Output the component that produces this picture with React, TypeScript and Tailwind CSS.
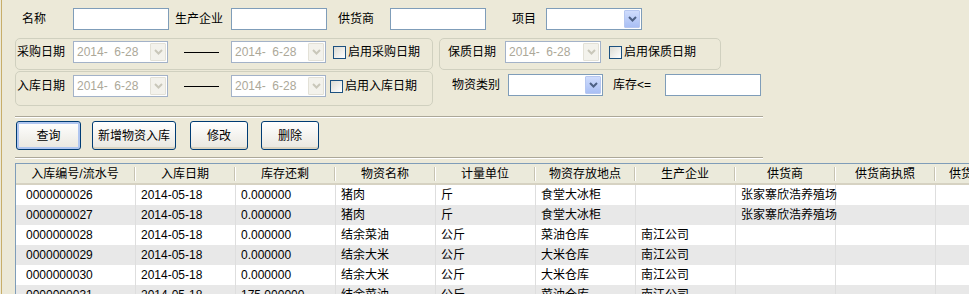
import React from 'react';

// 物资入库查询 - XP 风格窗体

const Chevron = ({ disabled }: { disabled?: boolean }) => (
  <svg width="9" height="6" viewBox="0 0 9 6">
    <path
      d="M1 1 L4.5 4.5 L8 1"
      fill="none"
      stroke={disabled ? '#c9c7ba' : '#4d6185'}
      strokeWidth="2"
    />
  </svg>
);

const DropButton = ({ disabled }: { disabled?: boolean }) =>
  disabled ? (
    <div className="w-[16px] h-[18px] flex items-center justify-center bg-[#f3f2ec] border border-[#e3e1d7] rounded-[1px]">
      <Chevron disabled />
    </div>
  ) : (
    <div className="w-[16px] h-[18px] flex items-center justify-center bg-linear-to-b from-[#cfdcfc] to-[#a9bff4] border border-[#b6c7f0] rounded-[1px]">
      <Chevron />
    </div>
  );

const TextBox = ({ className }: { className: string }) => (
  <div className={`h-[22px] bg-white border border-[#7f9db9] ${className}`} />
);

const Select = ({ className }: { className: string }) => (
  <div className={`h-[22px] bg-white border border-[#7f9db9] flex items-center justify-end pr-px ${className}`}>
    <DropButton />
  </div>
);

const DatePicker = ({ className }: { className: string }) => (
  <div className={`h-[22px] bg-white border border-[#a3b2c8] flex items-center justify-between pl-[3px] pr-px text-[#aca899] ${className}`}>
    <span className="whitespace-pre">2014-  6-28</span>
    <DropButton disabled />
  </div>
);

const CheckBox = ({ className }: { className: string }) => (
  <div className={`w-[13px] h-[13px] border border-[#1c5180] bg-linear-to-br from-[#dcdbd3] to-white ${className}`} />
);

const XpButton = ({ label, className, focused }: { label: string; className: string; focused?: boolean }) => (
  <div
    className={`h-[29px] flex items-center justify-center border border-[#003c74] rounded-[3px] bg-linear-to-b from-white to-[#e9e7df] ${
      focused
        ? 'shadow-[inset_0_0_0_2px_#b0c6f0]'
        : 'shadow-[inset_0_-2px_0_#d9d3c1]'
    } ${className}`}
  >
    {label}
  </div>
);

const columns = [
  { title: '入库编号/流水号', w: 'w-[120px]', pad: 'pl-[10px]' },
  { title: '入库日期', w: 'w-[100px]', pad: 'pl-[5px]' },
  { title: '库存还剩', w: 'w-[100px]', pad: 'pl-[5px]' },
  { title: '物资名称', w: 'w-[100px]', pad: 'pl-[5px]' },
  { title: '计量单位', w: 'w-[100px]', pad: 'pl-[5px]' },
  { title: '物资存放地点', w: 'w-[100px]', pad: 'pl-[5px]' },
  { title: '生产企业', w: 'w-[100px]', pad: 'pl-[5px]' },
  { title: '供货商', w: 'w-[100px]', pad: 'pl-[5px]' },
  { title: '供货商执照', w: 'w-[100px]', pad: 'pl-[5px]' },
  { title: '供货商联系人', w: 'w-[100px]', pad: 'pl-[5px]' },
];

const rows = [
  ['0000000026', '2014-05-18', '0.000000', '猪肉', '斤', '食堂大冰柜', '', '张家寨欣浩养殖场', '', ''],
  ['0000000027', '2014-05-18', '0.000000', '猪肉', '斤', '食堂大冰柜', '', '张家寨欣浩养殖场', '', ''],
  ['0000000028', '2014-05-18', '0.000000', '结余菜油', '公斤', '菜油仓库', '南江公司', '', '', ''],
  ['0000000029', '2014-05-18', '0.000000', '结余大米', '公斤', '大米仓库', '南江公司', '', '', ''],
  ['0000000030', '2014-05-18', '0.000000', '结余大米', '公斤', '大米仓库', '南江公司', '', '', ''],
  ['0000000031', '2014-05-18', '175.000000', '结余菜油', '公斤', '菜油仓库', '南江公司', '', '', ''],
];

export default function App() {
  return (
    <div className="w-[969px] h-[294px] overflow-hidden bg-[#ece9d8] pl-px text-[12px] text-black font-['Liberation_Sans','Noto_Sans_CJK_SC',sans-serif]">
      <div className="h-full border-l border-[#c8ae6a] pt-[8px]">
        {/* 第一行 查询条件 */}
        <div className="flex items-center h-[22px] pl-[20px]">
          <span className="w-[51px]">名称</span>
          <TextBox className="w-[96px]" />
          <span className="ml-[6px] w-[56px]">生产企业</span>
          <TextBox className="w-[96px]" />
          <span className="ml-[11px] w-[52px]">供货商</span>
          <TextBox className="w-[96px]" />
          <span className="ml-[26px] w-[34px]">项目</span>
          <Select className="w-[96px]" />
        </div>

        {/* 日期分组 */}
        <div className="flex items-start mt-[8px] ml-[13px]">
          <div className="w-[418px]">
            <div className="h-[32px] border border-[#d0d0bf] rounded-[5px] pt-[2px] pl-px">
              <div className="flex items-center h-[22px]">
                <span className="w-[56px]">采购日期</span>
                <DatePicker className="w-[95px]" />
                <div className="ml-[16px] w-[35px] border-t border-black" />
                <DatePicker className="ml-[12px] w-[95px]" />
                <CheckBox className="ml-[7px]" />
                <span className="ml-[2px]">启用采购日期</span>
              </div>
            </div>
            <div className="mt-[1px] h-[35px] border border-[#d0d0bf] rounded-[5px] pt-[3px] pl-px">
              <div className="flex items-center h-[22px]">
                <span className="w-[56px]">入库日期</span>
                <DatePicker className="w-[95px]" />
                <div className="ml-[16px] w-[35px] border-t border-black" />
                <DatePicker className="ml-[12px] w-[95px]" />
                <CheckBox className="ml-[4px]" />
                <span className="ml-[2px]">启用入库日期</span>
              </div>
            </div>
          </div>

          <div className="ml-[6px]">
            <div className="w-[282px] h-[32px] border border-[#d0d0bf] rounded-[5px] pt-[2px] pl-[8px]">
              <div className="flex items-center h-[22px]">
                <span className="w-[57px]">保质日期</span>
                <DatePicker className="w-[96px]" />
                <CheckBox className="ml-[8px]" />
                <span className="ml-[2px]">启用保质日期</span>
              </div>
            </div>
            <div className="flex items-center h-[22px] mt-[4px] pl-[13px]">
              <span className="w-[56px]">物资类别</span>
              <Select className="w-[95px]" />
              <span className="ml-[10px] w-[52px]">库存&lt;=</span>
              <TextBox className="w-[96px]" />
            </div>
          </div>
        </div>

        {/* 分隔线 */}
        <div className="mt-[10px] ml-[13px] w-[748px] border-t border-b border-t-[#aca899] border-b-white" />

        {/* 按钮 */}
        <div className="flex mt-[3px] ml-[14px]">
          <XpButton label="查询" className="w-[65px]" focused />
          <XpButton label="新增物资入库" className="ml-[11px] w-[84px]" />
          <XpButton label="修改" className="ml-[14px] w-[58px]" />
          <XpButton label="删除" className="ml-[13px] w-[58px]" />
        </div>

        <div className="mt-[7px] ml-[13px] w-[748px] border-t border-b border-t-[#aca899] border-b-white" />

        {/* 数据表格 */}
        <div className="mt-[4px] ml-[13px] w-[960px] h-[140px] bg-white border-t border-l border-[#7f9db9]">
          <div className="flex h-[21px] bg-[#ebeadb] border-b-2 border-[#d6d2c2]">
            {columns.map((c) => (
              <div key={c.title} className={`${c.w} shrink-0 flex items-center`}>
                <span className="flex-1 text-center whitespace-nowrap">{c.title}</span>
                <div className="w-[2px] h-[14px] border-l border-r border-l-[#c7c3b2] border-r-white" />
              </div>
            ))}
          </div>
          {rows.map((r, i) => (
            <div key={i} className={`flex h-[20px] ${i % 2 === 1 ? 'bg-[#e8e8e8]' : 'bg-white'}`}>
              {columns.map((c, j) => (
                <div
                  key={j}
                  className={`${c.w} ${c.pad} shrink-0 flex items-center border-r border-[#dedede] whitespace-nowrap`}
                >
                  {r[j]}
                </div>
              ))}
            </div>
          ))}
        </div>
      </div>
    </div>
  );
}
